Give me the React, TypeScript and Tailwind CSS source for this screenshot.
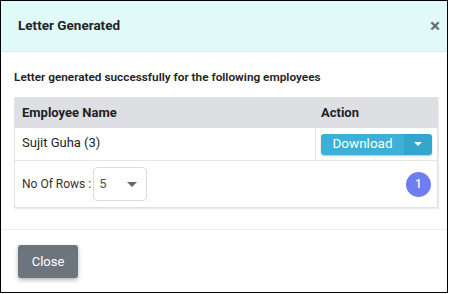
import React from "react";

export default function App() {
  return (
    <div className="w-[450px] h-[294px] bg-white">
      <div
        className="w-[448px] h-[293px] border border-black flex flex-col bg-white text-[#212529]"
        style={{ fontFamily: "Roboto, 'Liberation Sans', sans-serif" }}
      >
        <div className="h-[51px] shrink-0 bg-[#e0fbf7] border-b border-[#e3e8ea] flex items-center justify-between pl-[17px] pr-[7px]">
          <span className="text-[13.5px] font-bold leading-none text-[#1f2328]">Letter Generated</span>
          <span className="text-[19px] font-bold leading-none text-[#6b6f73] mt-[-2px]">×</span>
        </div>
        <div className="px-[13px] pt-[17px] pb-[21px] border-b border-[#e9ecef]">
          <div className="text-[11.8px] font-semibold leading-[17px] text-[#222] mb-[11px]">
            Letter generated successfully for the following employees
          </div>
          <div className="w-[424px] border border-[#e2e2e2] shadow-[1px_1px_1px_rgba(0,0,0,0.08)]">
            <div className="flex h-[30px] bg-[#dedfe2] text-[13px] font-bold text-[#222]">
              <div className="w-[301px] flex items-center pl-[7px]">Employee Name</div>
              <div className="flex-1 flex items-center pl-[5px]">Action</div>
            </div>
            <div className="flex h-[33px] text-[13px] border-b border-[#e6e6e6]">
              <div className="w-[301px] flex items-center pl-[7px] border-r border-[#e6e6e6] pb-[3px]">Sujit Guha (3)</div>
              <div className="flex-1 flex items-center pl-[5px]">
                <div className="flex h-[21px] w-[111px] rounded-[3px] overflow-hidden shadow-[0_1px_2px_rgba(0,0,0,0.25)]">
                  <div className="flex-1 bg-[#3cb1d5] text-white text-[13.5px] flex items-center justify-center leading-none">Download</div>
                  <div className="w-[28px] bg-[#32a6cc] flex items-center justify-center">
                    <svg width="8" height="4" viewBox="0 0 8 4"><path d="M0 0h8L4 4z" fill="#fff" /></svg>
                  </div>
                </div>
              </div>
            </div>
            <div className="flex h-[46px] items-center justify-between pl-[7px] pr-[6px]">
              <div className="flex items-center text-[12px] text-[#333]">
                <span>No Of Rows :</span>
                <div className="ml-[2px] w-[54px] h-[34px] border border-[#dcdcdc] rounded-[4px] flex items-center justify-between pl-[5px] pr-[9px] text-[#555] text-[13px]">
                  <span>5</span>
                  <svg width="10" height="5" viewBox="0 0 10 5"><path d="M0 0h10L5 5z" fill="#666" /></svg>
                </div>
              </div>
              <div className="w-[25px] h-[25px] rounded-full bg-[#6e7ef2] text-white text-[12px] font-medium flex items-center justify-center">1</div>
            </div>
          </div>
        </div>
        <div className="pl-[17px] pt-[15px]">
          <div className="w-[60px] h-[33px] bg-[#6c757d] rounded-[3px] text-white text-[13px] flex items-center justify-center shadow-[0_2px_4px_rgba(0,0,0,0.3)]">Close</div>
        </div>
      </div>
    </div>
  );
}
